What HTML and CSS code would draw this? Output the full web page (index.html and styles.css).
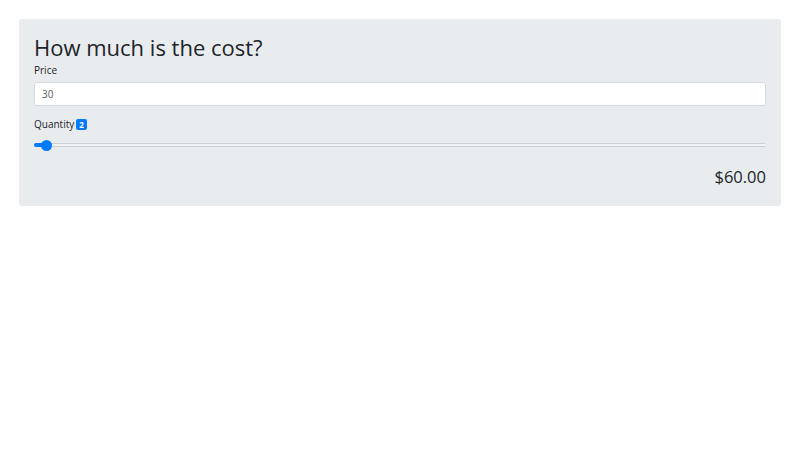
FILE: index.html
```html
<!DOCTYPE html>
<html lang="en">
<head>
    <meta charset="UTF-8">
    <meta name="viewport" content="width=device-width, initial-scale=1.0">
    <title>Cost Calculator</title>
    <link rel="stylesheet" href="styles.css">
</head>
<body>
    <div class="card">
        <h3>How much is the cost?</h3>
        <label class="field-label" for="price">Price</label>
        <input class="field" type="text" id="price" value="30">
        <label class="field-label qty-label" for="qty">Quantity <span class="badge">2</span></label>
        <input class="slider" type="range" id="qty" min="1" max="100" value="2">
        <div class="total">$60.00</div>
    </div>
</body>
</html>
```

FILE: styles.css
```css
html, body {
    margin: 0;
    font-family: "Open Sans", "Noto Sans", Arial, sans-serif;
    color: #212529;
    background: #fff;
}
body {
    padding: 19px;
}
.card {
    background: #e9ecef;
    border-radius: 3px;
    padding: 15px 15px 18px 15px;
    display: flex;
    flex-direction: column;
}
.card h3 {
    font-weight: 400;
    font-size: 22px;
    line-height: 26px;
    margin: 0 0 3px 0;
}
.field-label {
    font-size: 10px;
    line-height: 14px;
    margin-bottom: 5px;
}
.field {
    height: 24px;
    box-sizing: border-box;
    border: 1px solid #d6dadf;
    border-radius: 3px;
    background: #fff;
    padding: 0 7px;
    font-family: inherit;
    font-size: 10px;
    color: #5a6169;
    margin: 0 0 11px 0;
}
.qty-label {
    display: flex;
    align-items: center;
    gap: 2px;
    margin-bottom: 8px;
}
.badge {
    background: #007bff;
    color: #fff;
    font-size: 8px;
    font-weight: 700;
    line-height: 11px;
    padding: 0 3px;
    border-radius: 2px;
}
.slider {
    -webkit-appearance: none;
    appearance: none;
    margin: 0;
    height: 12px;
    background: transparent;
    width: 100%;
}
.slider::-webkit-slider-runnable-track {
    height: 4px;
    border-radius: 2px;
    background:
        linear-gradient(#007bff, #007bff) left / 12px 100% no-repeat,
        linear-gradient(to bottom, #cdd0d3 0 1px, #f1f3f4 1px 3px, #cdd0d3 3px);
}
.slider::-webkit-slider-thumb {
    -webkit-appearance: none;
    width: 11px;
    height: 11px;
    border-radius: 50%;
    background: #007bff;
    margin-top: -3.5px;
}
.total {
    align-self: flex-end;
    font-size: 16.5px;
    line-height: 22px;
    margin-top: 15px;
}
```
